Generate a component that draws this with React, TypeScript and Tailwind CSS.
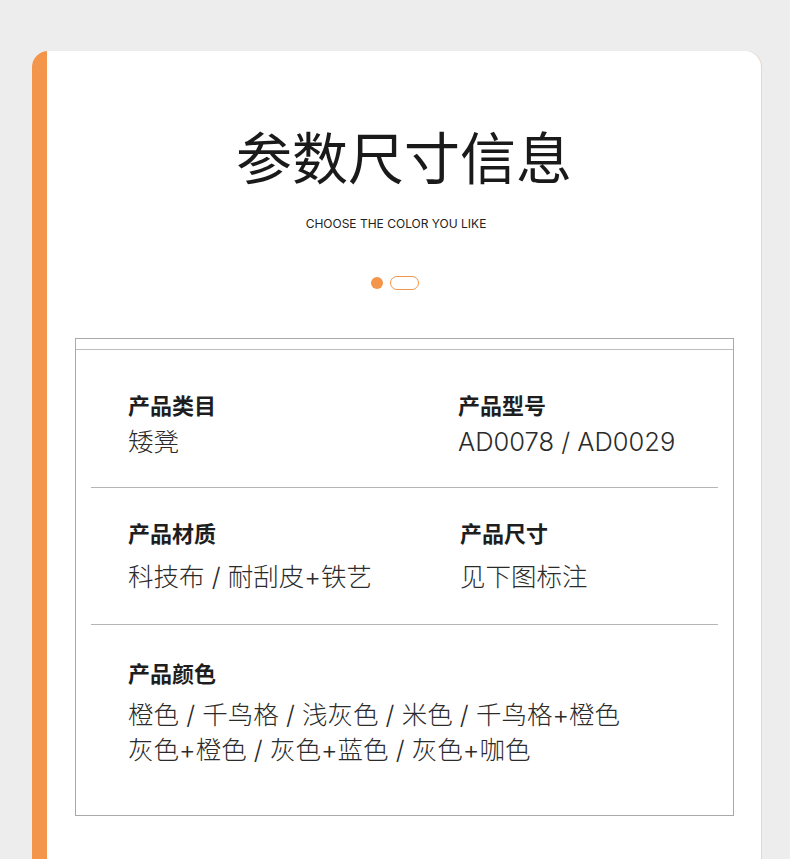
const rows = [
  {
    cells: [
      { label: "产品类目", value: ["矮凳"] },
      { label: "产品型号", value: ["AD0078 / AD0029"] },
    ],
    pad: "pt-[42px] pb-[29px]",
    gap: "mt-[9px]",
  },
  {
    cells: [
      { label: "产品材质", value: ["科技布 / 耐刮皮+铁艺"] },
      { label: "产品尺寸", value: ["见下图标注"], shift: true },
    ],
    pad: "pt-[32px] pb-[31px]",
    gap: "mt-[16px]",
  },
];

const valueFont = { fontFamily: 'Inter, "Noto Sans CJK SC", sans-serif' };

const InfoCell = ({ label, value, gap, shift }: { label: string; value: string[]; gap: string; shift?: boolean }) => (
  <div className={shift ? "pl-[2px]" : ""}>
    <div className="text-[22px] leading-[25px] font-bold text-[#1e1e1e]">{label}</div>
    <div className={`${gap} text-[25.5px] leading-[32px] font-light text-[#2b2b2b] whitespace-nowrap`} style={valueFont}>
      {value.map((v) => (
        <div key={v}>{v}</div>
      ))}
    </div>
  </div>
);

export default function App() {
  return (
    <div
      className="min-h-[859px] bg-[#ededed] pt-[51px]"
      style={{ fontFamily: '"Noto Sans CJK SC", "Noto Sans", sans-serif' }}
    >
      <div className="ml-[32px] w-[729px] h-[808px] flex bg-white rounded-t-[16px] overflow-hidden shadow-[1px_0_0_#e6d6cc]">
        <div className="w-[15px] shrink-0 bg-[#f3954a]" />
        <div className="flex-1 flex flex-col pt-[76px]">
          <h1 className="text-center text-[56px] leading-[56px] font-normal text-[#1a1a1a]">参数尺寸信息</h1>
          <p
            className="mt-[33px] pr-[16px] text-center text-[12px] leading-[16px] text-[#222]"
            style={{ fontFamily: "Inter, sans-serif" }}
          >
            CHOOSE THE COLOR YOU LIKE
          </p>
          <div className="mt-[44px] pr-[18px] flex justify-center items-center gap-[7px] h-[14px]">
            <span className="w-[12px] h-[12px] rounded-full bg-[#f3954a]" />
            <span className="w-[29px] h-[14px] rounded-full border-[1.5px] border-[#f3954a]" />
          </div>

          <div className="mt-[48px] ml-[28px] w-[659px] border border-[#a9a9a9]">
            <div className="h-[11px] border-b border-[#bdbdbd]" />
            {rows.map((row, i) => (
              <div key={i}>
                <div className={`grid grid-cols-[330px_1fr] pl-[52px] ${row.pad}`}>
                  {row.cells.map((c) => (
                    <InfoCell key={c.label} label={c.label} value={c.value} gap={row.gap} shift={c.shift} />
                  ))}
                </div>
                <div className="mx-[15px] h-px bg-[#b5b5b5]" />
              </div>
            ))}
            <div className="pl-[52px] pt-[35px] pb-[48px]">
              <div className="text-[22px] leading-[25px] font-bold text-[#1e1e1e]">产品颜色</div>
              <div
                className="mt-[12px] text-[25.5px] leading-[35px] font-light text-[#2b2b2b] whitespace-nowrap"
                style={valueFont}
              >
                <div>橙色 / 千鸟格 / 浅灰色 / 米色 / 千鸟格+橙色</div>
                <div>灰色+橙色 / 灰色+蓝色 / 灰色+咖色</div>
              </div>
            </div>
          </div>
        </div>
      </div>
    </div>
  );
}
